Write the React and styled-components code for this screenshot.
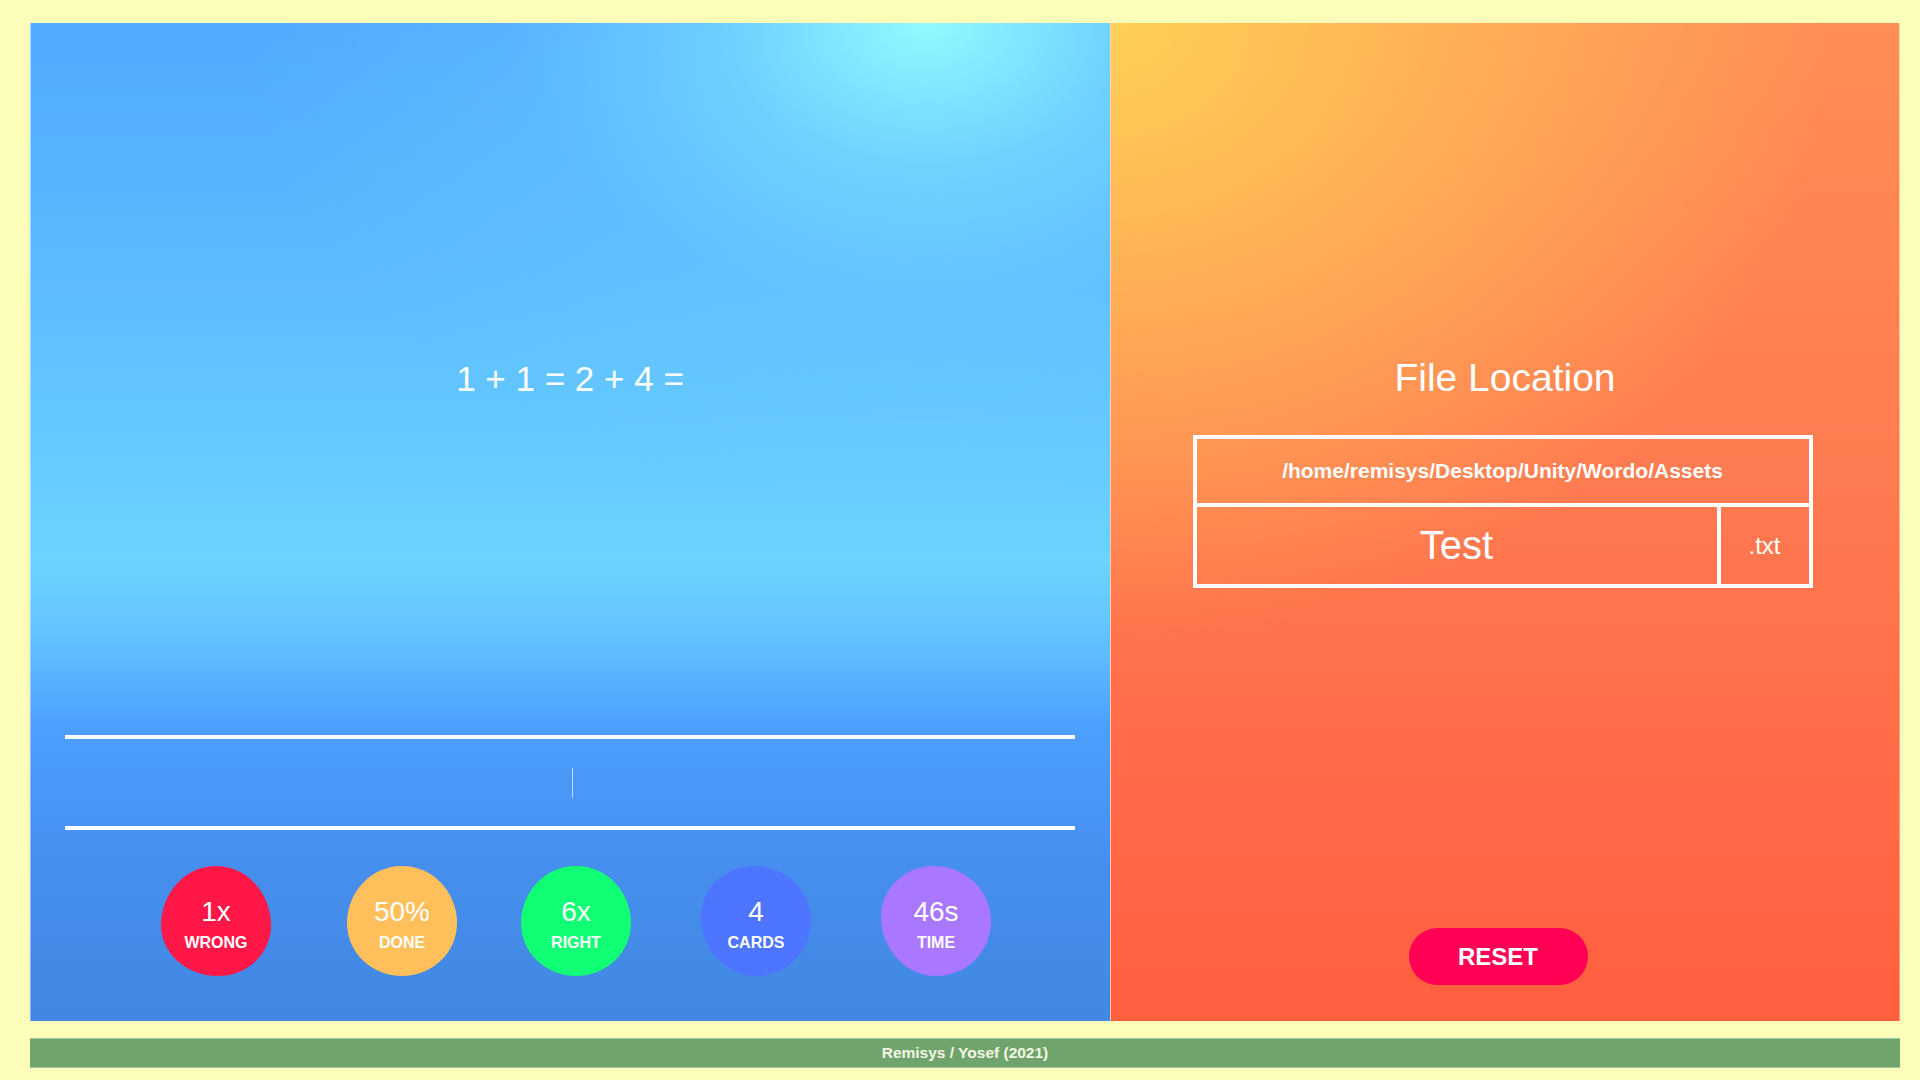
import React from 'react';
import styled, { createGlobalStyle } from 'styled-components';

const GlobalStyle = createGlobalStyle`
  body {
    margin: 0;
    background: #fcfdb9;
    font-family: "Liberation Sans", Arial, sans-serif;
  }
`;

const stats = [
  { value: '1x', label: 'WRONG', color: '#ff1748', radius: '50% 50% 48% 52% / 54% 54% 46% 46%' },
  { value: '50%', label: 'DONE', color: '#ffc05c', radius: '50% 50% 50% 50% / 52% 52% 48% 48%', nudge: 6 },
  { value: '6x', label: 'RIGHT', color: '#10ff75', radius: '50% 50% 50% 50% / 52% 52% 48% 48%' },
  { value: '4', label: 'CARDS', color: '#4d75ff', radius: '48% 52% 50% 50% / 46% 50% 50% 54%' },
  { value: '46s', label: 'TIME', color: '#aa78ff', radius: '48% 52% 50% 50% / 46% 50% 50% 54%' },
];

export default function App() {
  return (
    <>
      <GlobalStyle />
      <Page>
        <Board>
          <QuizPanel>
            <Question>1 + 1 = 2 + 4 =</Question>
            <AnswerField>
              <Caret />
            </AnswerField>
            <StatsRow>
              {stats.map((s) => (
                <StatBubble key={s.label} $color={s.color} $radius={s.radius} $nudge={s.nudge}>
                  <StatValue>{s.value}</StatValue>
                  <StatLabel>{s.label}</StatLabel>
                </StatBubble>
              ))}
            </StatsRow>
          </QuizPanel>

          <FilePanel>
            <Title>File Location</Title>
            <FileBox>
              <PathRow>/home/remisys/Desktop/Unity/Wordo/Assets</PathRow>
              <NameRow>
                <NameCell>Test</NameCell>
                <ExtCell>.txt</ExtCell>
              </NameRow>
            </FileBox>
            <ResetButton>RESET</ResetButton>
          </FilePanel>
        </Board>
        <Footer>Remisys / Yosef (2021)</Footer>
      </Page>
    </>
  );
}

const Page = styled.div`
  padding: 23px 20px 0 30px;
  display: flex;
  flex-direction: column;
`;

const Board = styled.div`
  display: flex;
  height: 998px;
`;

const QuizPanel = styled.section`
  width: 1080px;
  box-sizing: border-box;
  display: flex;
  flex-direction: column;
  padding: 0 35px 45px 34px;
  border-left: 1px solid rgba(255, 255, 255, 0.35);
  background:
    radial-gradient(ellipse 680px 480px at 83% 0%, rgba(148, 255, 255, 0.95) 0%, rgba(132, 236, 255, 0.55) 30%, rgba(115, 215, 255, 0.22) 60%, rgba(115, 215, 255, 0) 100%),
    linear-gradient(180deg, #50aaff 0%, #59b8ff 22%, #66ccff 45%, #6bd3ff 54%, #63c4ff 61%, #4c9eff 71%, #468fee 84%, #4287e3 100%);
`;

const Question = styled.div`
  flex: 1;
  display: flex;
  align-items: center;
  justify-content: center;
  color: #fff;
  font-size: 35px;
`;

const AnswerField = styled.div`
  height: 95px;
  box-sizing: border-box;
  border-top: 4px solid #fff;
  border-bottom: 4px solid #fff;
  display: flex;
  align-items: center;
  justify-content: center;
  padding-left: 5px;
`;

const Caret = styled.span`
  width: 1px;
  height: 30px;
  background: rgba(255, 255, 255, 0.65);
`;

const StatsRow = styled.div`
  margin-top: 36px;
  display: flex;
  justify-content: center;
  gap: 70px;
  padding-left: 12px;
`;

const StatBubble = styled.div`
  width: 110px;
  height: 110px;
  box-sizing: border-box;
  padding-top: 6px;
  border-radius: ${(p) => p.$radius};
  background: ${(p) => p.$color};
  display: flex;
  flex-direction: column;
  align-items: center;
  justify-content: center;
  gap: 8px;
  color: #fff;
  transform: translateX(${(p) => p.$nudge || 0}px);
`;

const StatValue = styled.div`
  font-size: 28px;
  line-height: 30px;
`;

const StatLabel = styled.div`
  font-size: 16px;
  font-weight: bold;
  line-height: 16px;
`;

const FilePanel = styled.section`
  flex: 1;
  display: flex;
  flex-direction: column;
  align-items: center;
  border-left: 1px solid rgba(255, 255, 255, 0.6);
  border-right: 1px solid rgba(255, 255, 255, 0.35);
  background:
    radial-gradient(ellipse 720px 620px at 0% 0%, rgba(255, 207, 86, 1) 0%, rgba(255, 207, 86, 0) 100%),
    linear-gradient(180deg, #ff8d56 0%, #ff7b51 45%, #ff6a47 75%, #ff5f3f 100%);
`;

const Title = styled.h1`
  margin: 333px 0 0;
  font-size: 39px;
  line-height: 44px;
  font-weight: normal;
  color: #fff;
`;

const FileBox = styled.div`
  width: 620px;
  margin-top: 35px;
  margin-right: 5px;
  box-sizing: border-box;
  border: 4px solid #fff;
  color: #fff;
`;

const PathRow = styled.div`
  height: 64px;
  border-bottom: 4px solid #fff;
  display: flex;
  align-items: center;
  justify-content: center;
  font-size: 21px;
  font-weight: bold;
`;

const NameRow = styled.div`
  height: 77px;
  display: flex;
`;

const NameCell = styled.div`
  flex: 1;
  border-right: 4px solid #fff;
  display: flex;
  align-items: center;
  justify-content: center;
  font-size: 40px;
`;

const ExtCell = styled.div`
  width: 88px;
  display: flex;
  align-items: center;
  justify-content: center;
  font-size: 24px;
`;

const ResetButton = styled.button`
  margin-top: auto;
  margin-bottom: 36px;
  margin-right: 14px;
  width: 179px;
  height: 57px;
  border: none;
  border-radius: 29px;
  background: #ff0055;
  color: #fff;
  font-family: inherit;
  font-size: 24px;
  font-weight: bold;
  cursor: pointer;
`;

const Footer = styled.footer`
  margin-top: 17px;
  height: 30px;
  box-sizing: border-box;
  border-top: 1px solid rgba(255, 255, 255, 0.35);
  border-bottom: 1px solid rgba(255, 255, 255, 0.35);
  background: #6fa56d;
  color: #f5f5e6;
  font-size: 15.5px;
  font-weight: bold;
  display: flex;
  align-items: center;
  justify-content: center;
`;
